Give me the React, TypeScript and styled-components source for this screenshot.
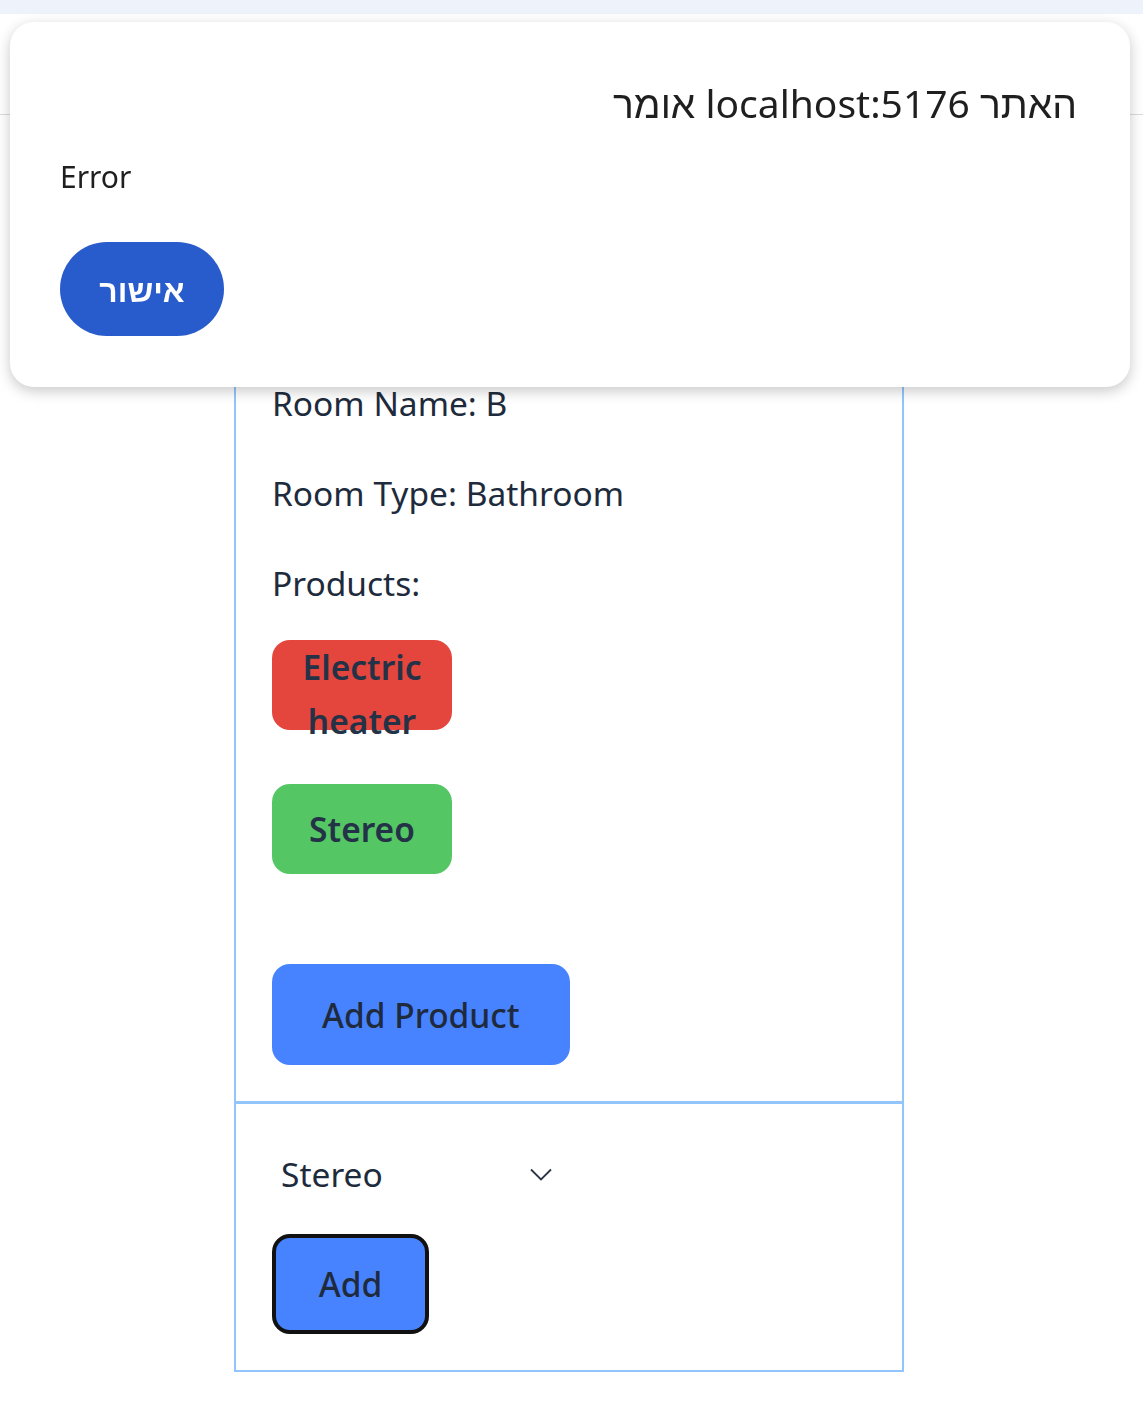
import styled, { createGlobalStyle } from "styled-components";

const GlobalStyle = createGlobalStyle`
  body {
    margin: 0;
    background: #ffffff;
    font-family: "Noto Sans", "Liberation Sans", sans-serif;
  }
`;

const products = [
  { name: "Electric heater", color: "#e4463d" },
  { name: "Stereo", color: "#54c663" },
];

function App() {
  return (
    <Page>
      <GlobalStyle />
      <TopStrip />
      <Header />
      <Main>
        <RoomCard>
          <InfoLine>Room Name: B</InfoLine>
          <InfoLine>Room Type: Bathroom</InfoLine>
          <InfoLine>Products:</InfoLine>
          <ProductList>
            {products.map((p) => (
              <ProductChip key={p.name} $bg={p.color}>
                {p.name}
              </ProductChip>
            ))}
          </ProductList>
          <PrimaryButton>Add Product</PrimaryButton>
        </RoomCard>
        <AddPanel>
          <SelectWrap>
            <ProductSelect defaultValue="Stereo">
              <option>Electric heater</option>
              <option>Stereo</option>
            </ProductSelect>
            <svg width="22" height="13" viewBox="0 0 22 13">
              <path d="M1 1.5 L11 11.5 L21 1.5" fill="none" stroke="#2b3544" strokeWidth="1.8" />
            </svg>
          </SelectWrap>
          <AddButton>Add</AddButton>
        </AddPanel>
      </Main>

      <AlertDialog>
        <AlertTitle dir="rtl">האתר localhost:5176 אומר</AlertTitle>
        <AlertMessage>Error</AlertMessage>
        <OkButton>אישור</OkButton>
      </AlertDialog>
    </Page>
  );
}

const Page = styled.div`
  min-height: 1404px;
  background: #ffffff;
`;

const TopStrip = styled.div`
  height: 14px;
  background: #eef2fa;
`;

const Header = styled.header`
  height: 100px;
  border-bottom: 1px solid #dcdcdc;
`;

const Main = styled.main`
  display: flex;
  flex-direction: column;
  width: 670px;
  margin: 0 0 0 234px;
  padding-top: 223px;
`;

const RoomCard = styled.section`
  display: flex;
  flex-direction: column;
  align-items: flex-start;
  border: 2px solid #93c5fd;
  padding: 0 36px 36px;
  color: #1e2b3c;
`;

const InfoLine = styled.p`
  margin: 36px 0 0;
  font-size: 33.5px;
  line-height: 54px;
`;

const ProductList = styled.div`
  display: flex;
  flex-direction: column;
  gap: 54px;
  margin: 30px 0 90px;
`;

const ProductChip = styled.button<{ $bg: string }>`
  width: 180px;
  height: 90px;
  padding: 0 8px;
  border: none;
  border-radius: 18px;
  background: ${({ $bg }) => $bg};
  color: #243247;
  font-family: inherit;
  font-size: 33.5px;
  font-weight: 600;
  line-height: 54px;
`;

const PrimaryButton = styled.button`
  height: 101px;
  padding: 0 50px;
  border: none;
  border-radius: 18px;
  background: #4883ff;
  color: #1f2b3d;
  font-family: inherit;
  font-size: 33.5px;
  font-weight: 500;
`;

const AddPanel = styled.section`
  display: flex;
  flex-direction: column;
  align-items: flex-start;
  gap: 24px;
  border: 2px solid #93c5fd;
  border-top-width: 1px;
  padding: 34px 36px 36px;
  color: #1e2b3c;
`;

const SelectWrap = styled.div`
  display: flex;
  align-items: center;
  width: 280px;
  height: 72px;
`;

const ProductSelect = styled.select`
  flex: 1;
  appearance: none;
  border: none;
  background: transparent;
  padding: 0 9px;
  color: #1e2b3c;
  font-family: inherit;
  font-size: 33.5px;
  outline: none;
`;

const AddButton = styled.button`
  width: 157px;
  height: 100px;
  border: 4px solid #111111;
  border-radius: 18px;
  background: #4883ff;
  color: #1f2b3d;
  font-family: inherit;
  font-size: 33.5px;
  font-weight: 500;
`;

const AlertDialog = styled.div`
  position: fixed;
  top: 22px;
  left: 10px;
  width: 1120px;
  height: 365px;
  box-sizing: border-box;
  padding: 57px 53px 0 50px;
  background: #ffffff;
  border-radius: 24px;
  box-shadow: 0 4px 14px rgba(0, 0, 0, 0.22);
  display: flex;
  flex-direction: column;
  align-items: flex-start;
`;

const AlertTitle = styled.h2`
  align-self: stretch;
  margin: 0;
  text-align: right;
  font-size: 39px;
  font-weight: 400;
  line-height: 48px;
  color: #1f1f1f;
`;

const AlertMessage = styled.p`
  margin: 30px 0 0;
  font-size: 30px;
  line-height: 40px;
  color: #1f1f1f;
`;

const OkButton = styled.button`
  margin: 45px 0 0;
  width: 164px;
  height: 94px;
  border: none;
  border-radius: 47px;
  background: #285bcc;
  color: #ffffff;
  font-family: inherit;
  font-size: 32px;
  font-weight: 600;
`;

export default App;
